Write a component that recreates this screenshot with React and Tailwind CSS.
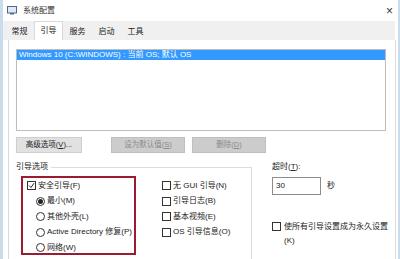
import React from 'react';

const font = { fontFamily: '"Liberation Sans", "Noto Sans CJK SC", sans-serif' };

const Box = ({ checked }) => (
  <span className="w-[9px] h-[9px] border border-[#333] bg-white flex items-center justify-center shrink-0">
    {checked && (
      <svg width="7" height="7" viewBox="0 0 7 7">
        <path d="M1 3.5 L3 5.5 L6 1.2" fill="none" stroke="#222" strokeWidth="1" />
      </svg>
    )}
  </span>
);

const Radio = ({ checked }) => (
  <span className="w-[9px] h-[9px] rounded-full border border-[#333] bg-white flex items-center justify-center shrink-0">
    {checked && <span className="w-[5px] h-[5px] rounded-full bg-[#222]" />}
  </span>
);

const Check = ({ label, checked }) => (
  <div className="flex items-center gap-[2px] h-[15.5px] whitespace-nowrap">
    <Box checked={checked} />
    <span>{label}</span>
  </div>
);

const RadioRow = ({ label, checked }) => (
  <div className="flex items-center gap-[2px] h-[15.5px] pl-[9px] whitespace-nowrap">
    <Radio checked={checked} />
    <span>{label}</span>
  </div>
);

const tabs = ['常规', '引导', '服务', '启动', '工具'];

const App = () => {
  return (
    <div
      className="w-[400px] h-[259px] bg-white overflow-hidden text-[8px] text-[#222] leading-none relative border-l-[3px] border-l-[#c9dcec] border-r-[2px] border-r-[#c9dcec]"
      style={font}
    >
      {/* title bar */}
      <div className="h-[21px] flex items-center pl-[4px] pr-[5px]">
        <svg width="10" height="9" viewBox="0 0 10 9" className="mr-[6px]">
          <rect x="0.5" y="0.5" width="9" height="6.5" fill="#dfe8f3" stroke="#4a6a8f" />
          <rect x="3" y="7" width="4" height="1.5" fill="#4a6a8f" />
        </svg>
        <span className="text-[8px] text-[#333]">系统配置</span>
        <span className="ml-auto text-[12px] text-[#333] leading-none">×</span>
      </div>

      {/* tab strip */}
      <div className="h-[19px] bg-[#f0f0f0] flex items-end pl-[2px] mr-[3px]">
        {tabs.map((t, i) =>
          i === 1 ? (
            <div
              key={t}
              className="h-[19px] w-[29px] bg-white border border-b-0 border-[#d9d9d9] flex items-center justify-center"
            >
              {t}
            </div>
          ) : (
            <div key={t} className="h-[16px] w-[29px] flex items-center justify-center">
              {t}
            </div>
          )
        )}
      </div>

      {/* panel */}
      <div className="h-[219px] mr-[2px] ml-[5px] border-l border-r border-[#dadada] bg-white pt-[9px] px-[7px]">
        {/* list box */}
        <div className="h-[82px] w-[370px] border border-[#bdbdbd] bg-white">
          <div className="h-[10px] bg-[#3399ff] text-white flex items-center pl-[2px]">
            Windows 10 (C:\WINDOWS) : 当前 OS; 默认 OS
          </div>
        </div>

        {/* buttons */}
        <div className="flex mt-[6px] text-[7.5px]">
          <div className="w-[66px] h-[16px] bg-[#e1e1e1] border border-[#cfcfcf] flex items-center justify-center">
            高级选项(<span className="underline">V</span>)...
          </div>
          <div className="w-[74px] h-[16px] ml-[29px] bg-[#cccccc] border border-[#bfbfbf] flex items-center justify-center text-[#8a8a8a]">
            设为默认值(<span className="underline">S</span>)
          </div>
          <div className="w-[74px] h-[16px] ml-[7px] bg-[#cccccc] border border-[#bfbfbf] flex items-center justify-center text-[#8a8a8a]">
            删除(<span className="underline">D</span>)
          </div>
        </div>

        {/* lower area */}
        <div className="flex mt-[9px]">
          {/* group box */}
          <div className="w-[250px] h-[95px] relative border-t border-r border-[#dcdcdc] mt-[5px]">
            <span className="absolute -top-[5px] left-0 bg-white pr-[3px]">引导选项</span>
            <div className="flex pt-[8px]">
              <div className="ml-[5px] w-[115px] h-[79px] border-2 border-[#9b1c31] pl-[4px]">
                <Check label="安全引导(F)" checked />
                <RadioRow label="最小(M)" checked />
                <RadioRow label="其他外壳(L)" />
                <RadioRow label="Active Directory 修复(P)" />
                <RadioRow label="网络(W)" />
              </div>
              <div className="ml-[26px] pt-[2px]">
                <Check label="无 GUI 引导(N)" />
                <Check label="引导日志(B)" />
                <Check label="基本视频(E)" />
                <Check label="OS 引导信息(O)" />
              </div>
            </div>
          </div>

          {/* timeout */}
          <div className="ml-[20px] flex flex-col">
            <span className="mt-[1px]">超时(<span className="underline">T</span>):</span>
            <div className="flex items-center mt-[6px]">
              <div className="w-[49px] h-[18px] border border-[#8c8c8c] flex items-center pl-[3px]">30</div>
              <span className="ml-[6px]">秒</span>
            </div>
            <div className="flex mt-[25px] gap-[3px]">
              <span className="mt-[2px]">
                <Box />
              </span>
              <span className="leading-[14px] whitespace-nowrap">
                使所有引导设置成为永久设置
                <br />
                (K)
              </span>
            </div>
          </div>
        </div>
      </div>
    </div>
  );
};

export default App;
